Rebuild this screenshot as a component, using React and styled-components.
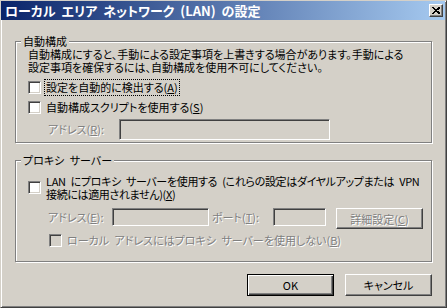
import React from 'react'
import styled, { createGlobalStyle, css } from 'styled-components'

const face = '#d4d0c8'

const GlobalStyle = createGlobalStyle`
html, body {
  margin: 0;
  padding: 0;
  background: ${face};
}
body {
  font-family: "Noto Sans CJK JP", "Liberation Sans", sans-serif;
  font-size: 11px;
}
`

const raised = css`
border: 1px solid;
border-color: #fff #404040 #404040 #fff;
box-shadow: inset -1px -1px #808080;
`

const sunken = css`
border: 1px solid;
border-color: #808080 #fff #fff #808080;
box-shadow: inset 1px 1px #404040, inset -1px -1px ${face};
`

const dim = css`
color: #808080;
text-shadow: 1px 1px 0 #fff;
`

const Window = styled.div`
box-sizing: border-box;
width: 447px;
height: 308px;
display: flex;
flex-direction: column;
background: ${face};
border: 1px solid;
border-color: ${face} #404040 #404040 ${face};
box-shadow: inset 1px 1px #fff, inset -1px -1px #808080;
color: #000;
font-feature-settings: "palt";
word-spacing: 3px;
`

const TitleBar = styled.div`
height: 19px;
margin-right: 1px;
padding: 0 2px 0 4px;
display: flex;
align-items: center;
justify-content: space-between;
background: linear-gradient(to right, #0a246a, #a6caf0);
`

const Title = styled.span`
color: #fff;
font-size: 13px;
font-weight: bold;
line-height: 15px;
white-space: nowrap;
`

const CloseButton = styled.div`
box-sizing: border-box;
width: 14px;
height: 13px;
display: flex;
align-items: center;
justify-content: center;
background: ${face};
${raised}
`

const Body = styled.div`
display: flex;
flex-direction: column;
padding: 21px 14px 0 14px;
`

const Group = styled.div`
box-sizing: border-box;
display: flex;
flex-direction: column;
margin-top: ${p => p.$top}px;
padding: 0 12px ${p => p.$bottom}px;
border: 1px solid #808080;
box-shadow: inset 1px 1px #fff, 1px 1px #fff;
`

const GroupTitle = styled.div`
align-self: flex-start;
margin: -8px 0 0 -7px;
padding: 0 2px;
background: ${face};
line-height: 14px;
`

const Description = styled.p`
margin: 0;
line-height: 12.5px;
white-space: nowrap;
`

const CheckRow = styled.div`
display: flex;
align-items: center;
margin-top: ${p => p.$top}px;
margin-left: ${p => p.$indent || 0}px;
min-height: 17px;
`

const Box = styled.span`
box-sizing: border-box;
flex: none;
width: 13px;
height: 13px;
background: ${p => (p.$disabled ? face : '#fff')};
${sunken}
`

const CheckLabel = styled.span`
margin-left: 3px;
padding: 0 1px;
border: 1px dotted ${p => (p.$focus ? '#000' : 'transparent')};
line-height: ${p => p.$lh || 15}px;
letter-spacing: ${p => p.$ls || 0}px;
white-space: nowrap;
${p => p.$disabled && dim}
`

const FieldRow = styled.div`
display: flex;
align-items: flex-start;
margin-top: ${p => p.$top}px;
padding-left: 20px;
`

const FieldLabel = styled.span`
flex: none;
width: ${p => p.$w}px;
margin-left: ${p => p.$gap || 0}px;
line-height: ${p => p.$h}px;
white-space: nowrap;
${dim}
`

const Field = styled.div`
box-sizing: border-box;
flex: none;
width: ${p => p.$w}px;
height: ${p => p.$h}px;
background: ${face};
${sunken}
`

const Button = styled.div`
box-sizing: border-box;
flex: none;
width: 87px;
height: ${p => p.$h || 22}px;
margin-left: ${p => p.$gap || 0}px;
display: flex;
align-items: center;
justify-content: center;
background: ${face};
line-height: 14px;
white-space: nowrap;
${raised}
${p => p.$default && css`
  border: 1px solid #000;
  box-shadow: inset 1px 1px #fff, inset -1px -1px #404040, inset -2px -2px #808080;
`}
${p => p.$disabled && dim}
`

const Footer = styled.div`
display: flex;
justify-content: flex-end;
margin-top: 12px;
`

const Key = styled.span`
text-decoration: underline;
`

const CloseGlyph = () => (
  <svg width="8" height="7" viewBox="0 0 8 7">
    <path d="M0.5 0.5 L7 6.5 M1.5 0.5 L8 6.5 M7 0.5 L0.5 6.5 M8 0.5 L1.5 6.5" stroke="#000" strokeWidth="1" shapeRendering="crispEdges" fill="none" />
  </svg>
)

export default function App() {
  return (
    <>
      <GlobalStyle />
      <Window>
        <TitleBar>
          <Title>ローカル エリア ネットワーク (LAN) の設定</Title>
          <CloseButton><CloseGlyph /></CloseButton>
        </TitleBar>
        <Body>
          <Group $top={0} $bottom={2}>
            <GroupTitle>自動構成</GroupTitle>
            <Description>
              自動構成にすると、手動による設定事項を上書きする場合があります。手動による<br />
              設定事項を確保するには、自動構成を使用不可にしてください。
            </Description>
            <CheckRow $top={6}>
              <Box />
              <CheckLabel $focus>設定を自動的に検出する(<Key>A</Key>)</CheckLabel>
            </CheckRow>
            <CheckRow $top={3}>
              <Box />
              <CheckLabel>自動構成スクリプトを使用する(<Key>S</Key>)</CheckLabel>
            </CheckRow>
            <FieldRow $top={3}>
              <FieldLabel $w={71} $h={21}>アドレス(<Key>R</Key>):</FieldLabel>
              <Field $w={211} $h={21} />
            </FieldRow>
          </Group>

          <Group $top={17} $bottom={12}>
            <GroupTitle>プロキシ サーバー</GroupTitle>
            <CheckRow $top={7}>
              <Box />
              <CheckLabel $lh={12.5} $ls={-0.35}>
                LAN にプロキシ サーバーを使用する (これらの設定はダイヤルアップまたは VPN<br />
                接続には適用されません)(<Key>X</Key>)
              </CheckLabel>
            </CheckRow>
            <FieldRow $top={7}>
              <FieldLabel $w={64} $h={18}>アドレス(<Key>E</Key>):</FieldLabel>
              <Field $w={97} $h={18} />
              <FieldLabel $w={61} $h={18} $gap={3}>ポート(<Key>T</Key>):</FieldLabel>
              <Field $w={53} $h={18} />
              <Button $h={21} $gap={10} $disabled>詳細設定(<Key>C</Key>)</Button>
            </FieldRow>
            <CheckRow $top={3} $indent={21}>
              <Box $disabled />
              <CheckLabel $disabled>ローカル アドレスにはプロキシ サーバーを使用しない(<Key>B</Key>)</CheckLabel>
            </CheckRow>
          </Group>

          <Footer>
            <Button $default>OK</Button>
            <Button $gap={11}>キャンセル</Button>
          </Footer>
        </Body>
      </Window>
    </>
  )
}
